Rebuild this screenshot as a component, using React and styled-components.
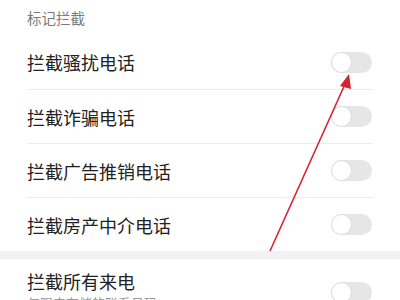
import React from 'react';
import styled, { createGlobalStyle } from 'styled-components';

const GlobalStyle = createGlobalStyle`
  html, body {
    margin: 0;
    padding: 0;
    background: #ffffff;
    font-family: 'Noto Sans CJK SC', 'Noto Sans', sans-serif;
  }
`;

const Page = styled.div`
  position: relative;
  width: 400px;
  height: 300px;
  overflow: hidden;
  background: #ffffff;
`;

const SectionTitle = styled.div`
  height: 35px;
  padding-left: 27px;
  display: flex;
  align-items: center;
  font-size: 14.5px;
  color: #7a7a7a;
  box-sizing: border-box;
  padding-bottom: 1px;
`;

const Row = styled.div`
  height: ${p => p.height || 53}px;
  padding: 0 28px 0 27px;
  display: flex;
  align-items: center;
  justify-content: space-between;
  box-sizing: border-box;
`;

const Label = styled.div`
  font-size: 18px;
  color: #222222;
  line-height: 22px;
`;

const SubLabel = styled.div`
  font-size: 13px;
  color: #9a9a9a;
  line-height: 18px;
  margin-top: 2px;
`;

const Divider = styled.div`
  height: 1px;
  margin: 0 27px;
  background: #ececec;
`;

const Band = styled.div`
  height: 8px;
  background: #f2f2f2;
`;

const Toggle = styled.div`
  width: 41px;
  height: 21px;
  border-radius: 11px;
  background: #e6e6e6;
  position: relative;
  flex-shrink: 0;
  margin-top: ${p => p.offset || 0}px;
`;

const Knob = styled.div`
  position: absolute;
  left: 0;
  top: 0;
  width: 21px;
  height: 21px;
  border-radius: 50%;
  background: #ffffff;
  box-sizing: border-box;
  border: 1px solid #dcdcdc;
`;

const TwoLineRow = styled.div`
  padding: 11px 28px 0 27px;
  display: flex;
  align-items: flex-start;
  justify-content: space-between;
`;

const Arrow = styled.svg`
  position: absolute;
  left: 0;
  top: 0;
  pointer-events: none;
`;

const items = ['拦截骚扰电话', '拦截诈骗电话', '拦截广告推销电话', '拦截房产中介电话'];

const Switch = ({ offset }) => (
  <Toggle offset={offset}>
    <Knob />
  </Toggle>
);

export default function App() {
  return (
    <Page>
      <GlobalStyle />
      <SectionTitle>标记拦截</SectionTitle>
      {items.map((t, i) => (
        <React.Fragment key={t}>
          <Row height={i === 0 ? 54 : 53}>
            <Label>{t}</Label>
            <Switch />
          </Row>
          {i < items.length - 1 && <Divider />}
        </React.Fragment>
      ))}
      <Band />
      <TwoLineRow>
        <div>
          <Label>拦截所有来电</Label>
          <SubLabel>仅限未存储的联系号码</SubLabel>
        </div>
        <Switch offset={12} />
      </TwoLineRow>
      <Arrow width="400" height="300" viewBox="0 0 400 300">
        <line x1="270" y1="251" x2="346" y2="82" stroke="#d9222f" strokeWidth="1.6" />
        <polygon points="349,74 340,86 351,89" fill="#d9222f" />
      </Arrow>
    </Page>
  );
}
